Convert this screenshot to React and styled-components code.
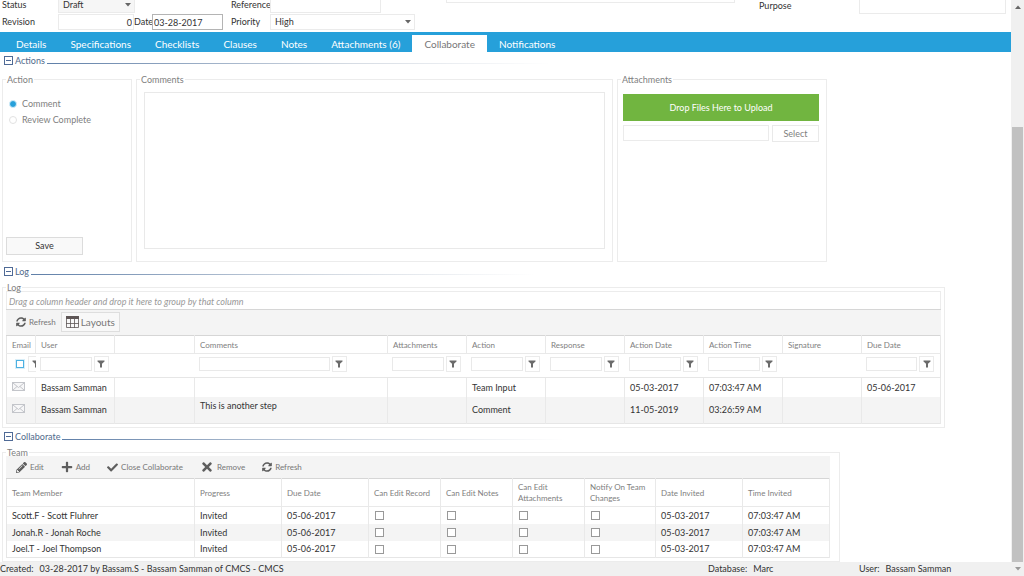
import React, { useState } from "react"
import styled, { createGlobalStyle } from "styled-components"
import { FaCheck, FaPencilAlt, FaPlus, FaSyncAlt, FaTimes } from "react-icons/fa"

const GlobalStyle = createGlobalStyle`
  * {
    box-sizing: border-box;
  }
  body {
    margin: 0;
    background: #fff;
    color: #333;
    font: 9px/12px Lato, "Open Sans", sans-serif;
  }
  button, input, select, textarea {
    margin: 0;
    font: inherit;
    color: inherit;
    border-radius: 0;
    outline: none;
  }
`

const Shell = styled.div`
  display: flex;
  height: 100vh;
  overflow: hidden;
`

const Main = styled.div`
  flex: 1;
  min-width: 0;
  display: flex;
  flex-direction: column;
`

const Body = styled.main`
  flex: 1;
  min-height: 0;
  overflow: hidden;
`

/* record header, scrolled so that only its last rows show */

const RecordForm = styled.form`
  display: grid;
  grid-template-columns: 221px 207px 289px 1fr;
  column-gap: 8px;
  align-items: end;
  align-content: end;
  height: 32px;
  padding: 0 5px 2px 2px;
  overflow: hidden;
`

const FormGroup = styled.div`
  display: grid;
  gap: 1px;
  padding-bottom: ${p => p.$lift || 0}px;
  padding-left: ${p => p.$indent || 0}px;
`

const FormRow = styled.div`
  display: flex;
  align-items: center;
  height: 16px;
`

const Label = styled.label`
  flex: none;
  width: ${p => p.$width}px;
`

const Field = styled.input`
  width: ${p => (p.$width ? `${p.$width}px` : "100%")};
  min-width: 0;
  height: 16px;
  padding: 0 1px;
  border: 1px solid ${p => (p.$strong ? "#b4b4b4" : "#ebebeb")};
  background: #fff;
  text-align: ${p => p.$align || "left"};
`

const Picker = styled.div`
  position: relative;
  width: ${p => p.$width}px;

  select {
    appearance: none;
    display: block;
    width: 100%;
    height: 16px;
    padding: 0 4px;
    border: 1px solid #ebebeb;
    background: ${p => (p.$filled ? "#f6f6f6" : "#fff")};
  }

  svg {
    position: absolute;
    right: 4px;
    top: 6px;
    pointer-events: none;
  }
`

/* tabs */

const TabBar = styled.nav`
  display: flex;
  align-items: flex-end;
  height: 20px;
  padding-left: 4px;
  background: #26a0da;
`

const Tab = styled.button`
  height: 17px;
  padding: 0 12px;
  border: 0;
  background: ${p => (p.$active ? "#fff" : "transparent")};
  color: ${p => (p.$active ? "#777" : "#fff")};
  font-size: 10px;
  line-height: 18px;
`

/* collapsible sections */

const SectionHead = styled.h2`
  display: flex;
  align-items: center;
  gap: 2px;
  height: 14px;
  margin: ${p => p.$top}px 0 ${p => p.$bottom}px;
  padding-left: 4px;
  color: #4f6a8c;
  font-size: 9px;
  font-weight: 400;
  line-height: 14px;

  button {
    display: flex;
    padding: 0;
    border: 0;
    background: none;
  }

  &::after {
    content: "";
    width: 50%;
    height: 1px;
    margin-top: 6px;
    background: linear-gradient(to right, #5f7fa8, #d5dbe3 60%, transparent);
  }
`

const HeadText = styled.span`
  padding-top: 2px;
`

const Panel = styled.fieldset`
  min-width: 0;
  margin: 0 ${p => p.$right || 0}px 0 0;
  padding: 0 3px 3px;
  border: 1px solid #ececec;
`

const Legend = styled.legend`
  height: 8px;
  padding: 0 1px;
  color: #808080;
  line-height: 9px;
`

const Panels = styled.div`
  display: grid;
  grid-template-columns: 130px 1fr 210px;
  gap: 4px;
  margin-right: 184px;
  padding-left: 2px;
`

const Stack = styled.div`
  padding-left: 2px;
`

const ActionBody = styled.div`
  display: flex;
  flex-direction: column;
  height: 175px;
  padding: 13px 0 3px;
`

const Radio = styled.label`
  display: flex;
  align-items: center;
  gap: 5px;
  height: 16px;
  padding-left: 3px;
  color: #808080;

  input {
    appearance: none;
    width: 8px;
    height: 8px;
    border: 1px solid #e2e2e2;
    border-radius: 50%;
    background: #fff;
  }

  input:checked {
    border-color: #d4ecf8;
    background: #26a0da;
  }
`

const PlainButton = styled.button`
  flex: none;
  width: ${p => p.$width}px;
  height: ${p => p.$height}px;
  padding: 0;
  border: 1px solid ${p => (p.$filled ? "#dcdcdc" : "#e9e9e9")};
  background: ${p => (p.$filled ? "#f9f9f9" : "#fff")};
  color: ${p => (p.$filled ? "#333" : "#808080")};
`

const SaveButton = styled(PlainButton)`
  margin-top: auto;
`

const CommentBox = styled.textarea`
  display: block;
  width: calc(100% - 8px);
  height: 157px;
  margin: 9px 4px 0;
  border: 1px solid #e9e9e9;
  resize: none;
`

const UploadBody = styled.div`
  display: grid;
  gap: 4px;
  padding: 11px 4px 0 2px;
`

const DropZone = styled.button`
  height: 27px;
  border: 0;
  background: #71b540;
  color: #fff;
`

const UploadRow = styled.div`
  display: flex;
  gap: 3px;
`

/* grids */

const GroupHint = styled.div`
  height: 18px;
  padding: 0 2px;
  border: 1px solid #ececec;
  border-bottom: 0;
  color: #999;
  font-style: italic;
  line-height: 19px;
`

const Toolbar = styled.div`
  display: flex;
  align-items: center;
  gap: ${p => p.$gap}px;
  height: ${p => p.$height}px;
  padding: 0 0 1px 10px;
  border-top: 1px solid ${p => (p.$ruled ? "#d6d6d6" : "#f4f4f4")};
  background: #f4f4f4;
`

const ToolButton = styled.button`
  display: flex;
  align-items: center;
  gap: ${p => (p.$framed ? 2 : 3)}px;
  height: 20px;
  padding: 0 ${p => (p.$framed ? 4 : 0)}px;
  border: ${p => (p.$framed ? "1px solid #dedede" : 0)};
  background: ${p => (p.$framed ? "#f8f8f8" : "none")};
  color: #777;
  font-size: ${p => (p.$framed ? 10 : 8)}px;

  svg {
    color: #5e5e5e;
  }
`

const Table = styled.table`
  width: 100%;
  table-layout: fixed;
  border-collapse: collapse;
  border: 1px solid #e6e6e6;
  border-top-color: #d6d6d6;

  th, td {
    height: ${p => p.$row}px;
    padding: 1px 0 0 5px;
    border-right: 1px solid #e9e9e9;
    overflow: hidden;
    white-space: nowrap;
    text-align: left;
    font-weight: 400;
  }

  thead th {
    height: ${p => p.$head}px;
    border-bottom: 1px solid #e9e9e9;
    color: #808080;
    font-size: 8px;
    line-height: 11px;
    white-space: normal;
  }

  tbody tr:nth-child(even) {
    background: #f4f4f4;
  }
`

const FilterRow = styled.tr`
  && td {
    height: 24px;
    padding: 0 6px 4px 4px;
    border-right: 0;
    border-bottom: 1px solid #e6e6e6;
  }
`

const Filter = styled.div`
  display: flex;
  align-items: center;
  gap: 2px;
  padding-right: ${p => (p.$roomy ? 35 : 0)}px;

  input[type="text"] {
    flex: 1;
    width: 0;
    height: 14px;
    border: 1px solid #e9e9e9;
  }
`

const FilterButton = styled.button`
  flex: none;
  display: grid;
  place-items: center;
  width: 15px;
  height: 16px;
  padding: 0;
  border: 1px solid #ebebeb;
  background: #fff;
`

const Check = styled.input.attrs({ type: "checkbox" })`
  appearance: none;
  flex: none;
  display: block;
  width: ${p => (p.$blue ? 8 : 9)}px;
  height: ${p => (p.$blue ? 8 : 9)}px;
  margin: 0 ${p => (p.$blue ? 2 : 0)}px 0 ${p => (p.$blue ? 5 : 1)}px;
  border: 1px solid ${p => (p.$blue ? "#4db1e2" : "#999")};
  background: #fff;
  box-shadow: ${p => (p.$blue ? "0 0 0 1px #d9eef8" : "none")};

  &:checked {
    background: #26a0da;
  }
`

const LogRow = styled.tr`
  && td {
    height: ${p => p.$height}px;
  }
  && td.note {
    padding-top: 3px;
    vertical-align: top;
  }
`

const TeamBody = styled.div`
  padding-right: 6px;
`

/* status bar and scroll rail */

const StatusBar = styled.footer`
  display: grid;
  grid-template-columns: 1fr 151px 152px;
  height: 14px;
  background: #f0f0f0;
  line-height: 14px;
  white-space: nowrap;

  span {
    margin-right: 6px;
  }
`

const Rail = styled.div`
  display: grid;
  grid-template-rows: 127px 1fr 14px;
  justify-items: center;
  width: 13px;
  background: #f0f0f0;

  svg {
    margin-top: 5px;
  }
`

const Thumb = styled.div`
  width: 11px;
  background: #c1c1c1;
`

const Caret = ({ up, color = "#666" }) => (
  <svg width="6" height="4" viewBox="0 0 6 4">
    <path d={up ? "M0 4L3 0.5L6 4z" : "M0 0H6L3 3.5z"} fill={color} />
  </svg>
)

const MinusBox = () => (
  <svg width="9" height="9" viewBox="0 0 9 9">
    <rect x="0.5" y="0.5" width="8" height="8" fill="#fff" stroke="#4f6a96" />
    <path d="M2 4.5H7" stroke="#4f6a96" />
  </svg>
)

const Funnel = () => (
  <svg width="8" height="8" viewBox="0 0 8 8">
    <path d="M0.5 0.5H7.5V1.6L5 3.8V7.5H3V3.8L0.5 1.6z" fill="#6b6b6b" />
  </svg>
)

const Envelope = () => (
  <svg width="13" height="9" viewBox="0 0 13 9">
    <rect x="0.5" y="0.5" width="12" height="8" fill="#f7f7f8" stroke="#c3c5ca" />
    <path d="M1 1L6.5 5.5L12 1M1 8L5 4.5M12 8L8 4.5" fill="none" stroke="#c3c5ca" />
  </svg>
)

const LayoutGrid = () => (
  <svg width="13" height="12" viewBox="0 0 13 12">
    <path d="M0 0H13V3H0z" fill="#5e5656" />
    <path
      d="M0.5 2V11.5H12.5V2M4.5 2V12M8.5 2V12M0 7.5H13"
      fill="none"
      stroke="#5e5656"
      strokeOpacity="0.8"
    />
  </svg>
)

const TABS = [
  "Details",
  "Specifications",
  "Checklists",
  "Clauses",
  "Notes",
  "Attachments (6)",
  "Collaborate",
  "Notifications",
]

const LOG_COLUMNS = [
  { title: "Email", width: 29, filter: "check" },
  { title: "User", width: 79, filter: "text" },
  { title: "", width: 80 },
  { title: "Comments", filter: "text", roomy: true },
  { title: "Attachments", width: 79, filter: "text" },
  { title: "Action", width: 79, filter: "text" },
  { title: "Response", width: 79, filter: "text" },
  { title: "Action Date", width: 79, filter: "text" },
  { title: "Action Time", width: 79, filter: "text" },
  { title: "Signature", width: 79 },
  { title: "Due Date", width: 79, filter: "text" },
]

const LOG = [
  {
    height: 19,
    user: "Bassam Samman",
    note: "",
    action: "Team Input",
    date: "05-03-2017",
    time: "07:03:47 AM",
    due: "05-06-2017",
  },
  {
    height: 27,
    user: "Bassam Samman",
    note: "This is another step",
    action: "Comment",
    date: "11-05-2019",
    time: "03:26:59 AM",
    due: "",
  },
]

const TEAM_COLUMNS = [
  ["Team Member"],
  ["Progress", 87],
  ["Due Date", 87],
  ["Can Edit Record", 72],
  ["Can Edit Notes", 72],
  ["Can Edit Attachments", 72],
  ["Notify On Team Changes", 71],
  ["Date Invited", 87],
  ["Time Invited", 87],
]

const TEAM = ["Scott.F - Scott Fluhrer", "Jonah.R - Jonah Roche", "Joel.T - Joel Thompson"]

const Section = ({ title, top, bottom, children }) => {
  const [open, setOpen] = useState(true)
  return (
    <section>
      <SectionHead $top={top} $bottom={bottom}>
        <button type="button" aria-label={`Toggle ${title}`} onClick={() => setOpen(!open)}>
          <MinusBox />
        </button>
        <HeadText>{title}</HeadText>
      </SectionHead>
      {open && children}
    </section>
  )
}

const Record = () => (
  <RecordForm>
    <FormGroup>
      <FormRow>
        <Label htmlFor="status" $width={56}>Status</Label>
        <Picker $width={77} $filled>
          <select id="status"><option>Draft</option></select>
          <Caret />
        </Picker>
      </FormRow>
      <FormRow>
        <Label htmlFor="revision" $width={56}>Revision</Label>
        <Field id="revision" $width={76} $align="right" defaultValue="0" />
        <Label htmlFor="date" $width={18}>Date</Label>
        <Field id="date" $width={71} $strong defaultValue="03-28-2017" />
      </FormRow>
    </FormGroup>
    <FormGroup>
      <FormRow>
        <Label htmlFor="reference" $width={39}>Reference</Label>
        <Field id="reference" $width={111} />
      </FormRow>
      <FormRow>
        <Label htmlFor="priority" $width={39}>Priority</Label>
        <Picker $width={145}>
          <select id="priority"><option>High</option></select>
          <Caret />
        </Picker>
      </FormRow>
    </FormGroup>
    <FormGroup $lift={27}>
      <FormRow>
        <Field aria-label="Subject" />
      </FormRow>
    </FormGroup>
    <FormGroup $lift={16} $indent={16}>
      <FormRow>
        <Label htmlFor="purpose" $width={100}>Purpose</Label>
        <Field id="purpose" />
      </FormRow>
    </FormGroup>
  </RecordForm>
)

const Actions = () => (
  <Panels>
    <Panel>
      <Legend>Action</Legend>
      <ActionBody>
        <Radio><input type="radio" name="action" defaultChecked />Comment</Radio>
        <Radio><input type="radio" name="action" />Review Complete</Radio>
        <SaveButton $width={77} $height={18} $filled>Save</SaveButton>
      </ActionBody>
    </Panel>
    <Panel>
      <Legend>Comments</Legend>
      <CommentBox aria-label="Comments" />
    </Panel>
    <Panel>
      <Legend>Attachments</Legend>
      <UploadBody>
        <DropZone>Drop Files Here to Upload</DropZone>
        <UploadRow>
          <Field aria-label="File" />
          <PlainButton $width={47} $height={17}>Select</PlainButton>
        </UploadRow>
      </UploadBody>
    </Panel>
  </Panels>
)

const FilterCell = ({ column }) => (
  <td>
    {column.filter && (
      <Filter $roomy={column.roomy}>
        {column.filter === "check" ? (
          <Check $blue aria-label="Filter Email" />
        ) : (
          <input type="text" aria-label={`Filter ${column.title}`} />
        )}
        <FilterButton aria-label={`${column.title} filter options`}>
          <Funnel />
        </FilterButton>
      </Filter>
    )}
  </td>
)

const Log = () => (
  <Stack>
    <Panel $right={66}>
      <Legend>Log</Legend>
      <GroupHint>Drag a column header and drop it here to group by that column</GroupHint>
      <Toolbar $gap={5} $height={26} $ruled>
        <ToolButton><FaSyncAlt size={10} />Refresh</ToolButton>
        <ToolButton $framed><LayoutGrid />Layouts</ToolButton>
      </Toolbar>
      <Table $head={18} $row={19}>
        <colgroup>
          {LOG_COLUMNS.map((c, i) => <col key={i} width={c.width} />)}
        </colgroup>
        <thead>
          <tr>{LOG_COLUMNS.map((c, i) => <th key={i}>{c.title}</th>)}</tr>
          <FilterRow>
            {LOG_COLUMNS.map((c, i) => <FilterCell key={i} column={c} />)}
          </FilterRow>
        </thead>
        <tbody>
          {LOG.map(r => (
            <LogRow key={r.date} $height={r.height}>
              <td><Envelope /></td>
              <td>{r.user}</td>
              <td />
              <td className="note">{r.note}</td>
              <td />
              <td>{r.action}</td>
              <td />
              <td>{r.date}</td>
              <td>{r.time}</td>
              <td />
              <td>{r.due}</td>
            </LogRow>
          ))}
        </tbody>
      </Table>
    </Panel>
  </Stack>
)

const Team = () => (
  <Stack>
    <Panel $right={171}>
      <Legend>Team</Legend>
      <TeamBody>
        <Toolbar $gap={17} $height={22}>
          <ToolButton><FaPencilAlt size={11} />Edit</ToolButton>
          <ToolButton><FaPlus size={12} />Add</ToolButton>
          <ToolButton><FaCheck size={11} />Close Collaborate</ToolButton>
          <ToolButton><FaTimes size={14} />Remove</ToolButton>
          <ToolButton><FaSyncAlt size={10} />Refresh</ToolButton>
        </Toolbar>
        <Table $head={28} $row={17}>
          <colgroup>
            {TEAM_COLUMNS.map(([title, width]) => <col key={title} width={width} />)}
          </colgroup>
          <thead>
            <tr>{TEAM_COLUMNS.map(([title]) => <th key={title}>{title}</th>)}</tr>
          </thead>
          <tbody>
            {TEAM.map(name => (
              <tr key={name}>
                <td>{name}</td>
                <td>Invited</td>
                <td>05-06-2017</td>
                {TEAM_COLUMNS.slice(3, 7).map(([title]) => (
                  <td key={title}><Check aria-label={`${title}, ${name}`} /></td>
                ))}
                <td>05-03-2017</td>
                <td>07:03:47 AM</td>
              </tr>
            ))}
          </tbody>
        </Table>
      </TeamBody>
    </Panel>
  </Stack>
)

const App = () => {
  const [tab, setTab] = useState("Collaborate")
  return (
    <Shell>
      <GlobalStyle />
      <Main>
        <Body>
          <Record />
          <TabBar>
            {TABS.map(name => (
              <Tab key={name} $active={name === tab} onClick={() => setTab(name)}>
                {name}
              </Tab>
            ))}
          </TabBar>
          <Section title="Actions" top={1} bottom={8}><Actions /></Section>
          <Section title="Log" top={2} bottom={5}><Log /></Section>
          <Section title="Collaborate" top={1} bottom={5}><Team /></Section>
        </Body>
        <StatusBar>
          <div><span>Created:</span>03-28-2017 by Bassam.S - Bassam Samman of CMCS - CMCS</div>
          <div><span>Database:</span>Marc</div>
          <div><span>User:</span>Bassam Samman</div>
        </StatusBar>
      </Main>
      <Rail>
        <Caret up />
        <Thumb />
        <Caret color="#999" />
      </Rail>
    </Shell>
  )
}

export default App
